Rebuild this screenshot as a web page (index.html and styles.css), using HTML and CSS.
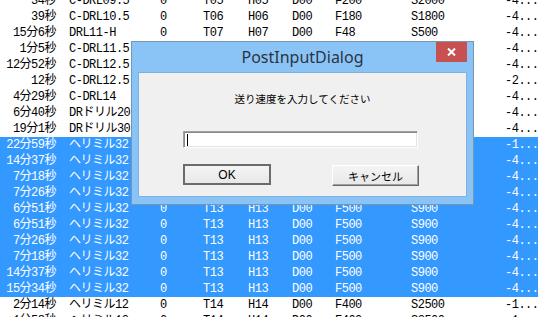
FILE: index.html
```html
<!DOCTYPE html>
<html lang="ja">
<head>
  <meta charset="UTF-8">
  <meta name="viewport" content="width=device-width, initial-scale=1.0">
  <title>PostInputDialog</title>
  <link rel="stylesheet" href="styles.css">
</head>
<body>
  <div class="list" id="list"></div>

  <div class="dialog">
    <div class="titlebar">
      <span></span>
      <span class="title">PostInputDialog</span>
      <button class="close-btn">
        <svg width="9" height="8" viewBox="0 0 9 8">
          <path d="M1 0.5 L8 7.5 M8 0.5 L1 7.5" stroke="#fff" stroke-width="2" fill="none"/>
        </svg>
      </button>
    </div>
    <div class="client">
      <div class="label">送り速度を入力してください</div>
      <div class="textbox"><span class="caret"></span></div>
      <div class="buttons">
        <button class="btn btn-default">OK</button>
        <button class="btn btn-cancel">キャンセル</button>
      </div>
    </div>
  </div>

  <script>
    // 工程リスト
    const rows = [
      ["34秒", "C-DRL09.5", "0", "T05", "H05", "D00", "F200", "S2000", "-4..."],
      ["39秒", "C-DRL10.5", "0", "T06", "H06", "D00", "F180", "S1800", "-4..."],
      ["15分6秒", "DRL11-H", "0", "T07", "H07", "D00", "F48", "S500", "-4..."],
      ["1分5秒", "C-DRL11.5", "0", "T08", "H08", "D00", "F160", "S1600", "-4..."],
      ["12分52秒", "C-DRL12.5", "0", "T09", "H09", "D00", "F150", "S1500", "-4..."],
      ["12秒", "C-DRL12.5", "0", "T09", "H09", "D00", "F150", "S1500", "-2..."],
      ["4分29秒", "C-DRL14", "0", "T10", "H10", "D00", "F130", "S1300", "-4..."],
      ["6分40秒", "DRドリル20", "0", "T11", "H11", "D00", "F100", "S800", "-4..."],
      ["19分1秒", "DRドリル30", "0", "T12", "H12", "D00", "F80", "S600", "-4..."]
    ];
    const selTimes = ["22分59秒", "14分37秒", "7分18秒", "7分26秒", "6分51秒",
                      "6分51秒", "7分26秒", "7分18秒", "14分37秒", "15分34秒"];
    selTimes.forEach((t, i) => {
      rows.push([t, "ヘリミル32", "0", "T13", "H13", "D00", "F500", "S900", i === 0 ? "-1..." : "-4...", true]);
    });
    rows.push(["2分14秒", "ヘリミル12", "0", "T14", "H14", "D00", "F400", "S2500", "-1..."]);
    rows.push(["1分58秒", "ヘリミル12", "0", "T14", "H14", "D00", "F400", "S2500", "-1..."]);

    const list = document.getElementById("list");
    rows.forEach(r => {
      const row = document.createElement("div");
      row.className = r[9] ? "row selected" : "row";
      for (let i = 0; i < 9; i++) {
        const cell = document.createElement("span");
        cell.className = i === 0 ? "cell time" : "cell";
        cell.textContent = r[i];
        row.appendChild(cell);
      }
      list.appendChild(row);
    });
  </script>
</body>
</html>
```

FILE: styles.css
```css
body {
  margin: 0;
  width: 538px;
  height: 317px;
  overflow: hidden;
  position: relative;
  background-color: #fff;
  font-family: "Liberation Mono", "Noto Sans CJK JP", monospace;
  color: #000;
}
.list {
  margin-top: -7px;
}
.row {
  display: grid;
  grid-template-columns: 69px 91px 43px 45px 44px 43px 76px 94px 1fr;
  height: 16px;
  line-height: 16px;
  font-size: 12px;
  letter-spacing: -0.5px;
  white-space: nowrap;
}
.row.selected {
  background-color: #3399ff;
  color: #fff;
}
.cell {
  overflow: hidden;
}
.cell.time {
  text-align: right;
  padding-right: 13px;
}
.dialog {
  position: absolute;
  left: 131px;
  top: 41px;
  width: 329px;
  height: 155px;
  padding: 0 6px 7px 6px;
  border: 1px solid #7a95b0;
  background-color: #8ac4f7;
  display: flex;
  flex-direction: column;
}
.titlebar {
  height: 30px;
  flex: none;
  display: grid;
  grid-template-columns: 1fr auto 1fr;
  align-items: start;
}
.title {
  font-family: "Noto Sans", sans-serif;
  font-size: 16px;
  line-height: 31px;
  color: #2b3440;
}
.close-btn {
  justify-self: end;
  width: 31px;
  height: 20px;
  margin: 0;
  padding: 0;
  border: none;
  background-color: #c75050;
  display: flex;
  align-items: center;
  justify-content: center;
}
.client {
  flex: 1;
  background-color: #f0f0f0;
  border: 1px solid #7fb0df;
  display: flex;
  flex-direction: column;
  align-items: center;
  padding-top: 18px;
  font-family: "Noto Sans CJK JP", sans-serif;
  font-size: 10.5px;
}
.label {
  height: 16px;
  line-height: 16px;
}
.textbox {
  margin-top: 24px;
  margin-right: 4px;
  width: 231px;
  height: 13px;
  padding: 1px;
  background-color: #fff;
  border: 1px solid;
  border-color: #a0a0a0 #fff #fff #a0a0a0;
  box-shadow: inset 1px 1px 0 #8a8a8a, inset -1px -1px 0 #e3e3e3;
  display: flex;
  align-items: center;
}
.caret {
  width: 1px;
  height: 12px;
  margin-left: 2px;
  background-color: #000;
}
.buttons {
  margin-top: 16px;
  margin-right: 3px;
  width: 236px;
  display: flex;
  justify-content: space-between;
  align-items: flex-start;
}
.btn {
  height: 21px;
  padding: 0;
  font-family: "Liberation Sans", "Noto Sans CJK JP", sans-serif;
  font-size: 11px;
  color: #000;
  background: linear-gradient(#f4f4f4, #e8e8e8);
}
.btn-default {
  width: 88px;
  border: 2px solid #6b6b6b;
  font-size: 12px;
}
.btn-cancel {
  width: 87px;
  margin-top: 1px;
  border: 1px solid;
  border-color: #fff #696969 #696969 #fff;
  box-shadow: inset -1px -1px 0 #a0a0a0;
}
```
